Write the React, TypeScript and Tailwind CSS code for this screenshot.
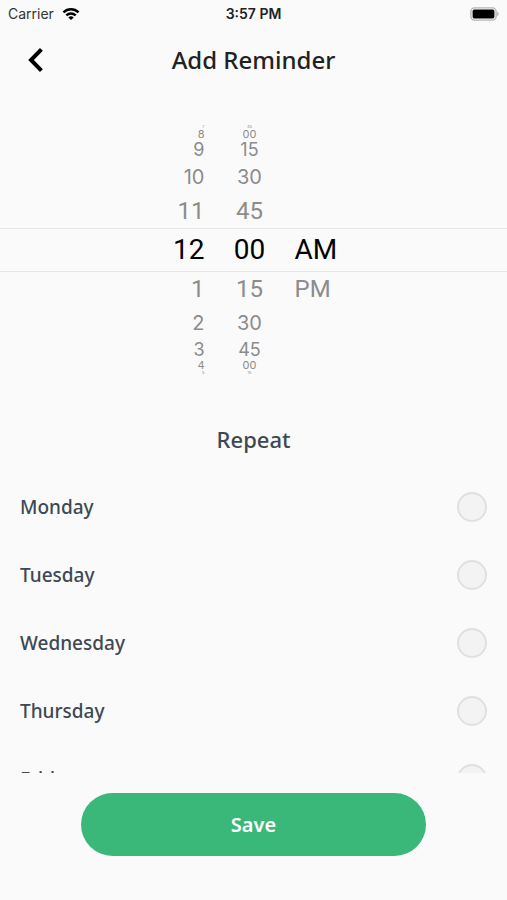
import React, { useState } from "react";
import clsx from "clsx";

const HOURS = ["12", "1", "2", "3", "4", "5", "6", "7", "8", "9", "10", "11"];
const MINUTES = ["00", "15", "30", "45"];
const PERIODS = ["AM", "PM"];
const DAYS = [
  "Monday",
  "Tuesday",
  "Wednesday",
  "Thursday",
  "Friday",
  "Saturday",
  "Sunday",
];

const OFFSETS = [-5, -4, -3, -2, -1, 0, 1, 2, 3, 4, 5];

// Row look by distance from the selected row, rows get smaller near the rim
const ROW_STYLES = [
  "h-11 text-[28px] text-black",
  "h-[34px] text-2xl text-[#8c8c8c]",
  "h-[34px] text-xl text-[#8c8c8c] font-['Inter',sans-serif]",
  "h-5 text-lg text-[#8c8c8c] font-['Inter',sans-serif]",
  "h-[11px] text-[11px] text-[#8c8c8c] font-['Inter',sans-serif]",
  "h-1 text-[4px] text-[#8c8c8c] font-['Inter',sans-serif]",
];

interface WheelProps {
  label: string;
  items: string[];
  value: number;
  loop?: boolean;
  className: string;
  onChange: (index: number) => void;
}

const Wheel = ({
  label,
  items,
  value,
  loop = false,
  className,
  onChange,
}: WheelProps) => (
  <div
    role="group"
    aria-label={label}
    className={clsx("flex flex-col", className)}
  >
    {OFFSETS.map((offset) => {
      const raw = value + offset;
      const index = loop ? (raw + items.length * 5) % items.length : raw;
      const rowStyle = ROW_STYLES[Math.abs(offset)];
      if (!items[index]) {
        return <div key={offset} className={rowStyle} />;
      }
      return (
        <button
          key={offset}
          type="button"
          aria-pressed={offset === 0}
          onClick={() => onChange(index)}
          className={clsx("flex items-center", rowStyle, "leading-none")}
        >
          {items[index]}
        </button>
      );
    })}
  </div>
);

const StatusBar = () => (
  <div className="grid h-7 shrink-0 grid-cols-3 items-center px-2 font-['Inter',sans-serif] text-sm text-[#333]">
    <div className="flex items-center gap-2">
      <span>Carrier</span>
      <svg width="18" height="14" viewBox="0 0 20 14" aria-hidden="true">
        <g fill="none" stroke="#000" strokeWidth="2.6">
          <path d="M1.6 5.2a12 12 0 0 1 16.8 0" />
          <path d="M4.8 8.6a7.4 7.4 0 0 1 10.4 0" />
        </g>
        <path d="M10 13.6 7 10.8a4.4 4.4 0 0 1 6 0z" fill="#000" />
      </svg>
    </div>
    <span className="text-center font-semibold text-[#222]">3:57 PM</span>
    <svg
      className="justify-self-end"
      width="29"
      height="14"
      viewBox="0 0 29 14"
      aria-hidden="true"
    >
      <rect
        x="0.9"
        y="0.9"
        width="25.2"
        height="12.2"
        rx="3.6"
        fill="#fafafa"
        stroke="#b5b5b5"
        strokeWidth="1.4"
      />
      <rect x="2.6" y="2.6" width="21.8" height="8.8" rx="1.6" fill="#000" />
      <path d="M27.2 4.8c2 .6 2 3.8 0 4.4z" fill="#b5b5b5" />
    </svg>
  </div>
);

const App = () => {
  const [hour, setHour] = useState(0);
  const [minute, setMinute] = useState(0);
  const [period, setPeriod] = useState(0);
  const [days, setDays] = useState<string[]>([]);

  const toggleDay = (day: string) => {
    setDays((prev) =>
      prev.includes(day) ? prev.filter((d) => d !== day) : [...prev, day]
    );
  };

  const handleSubmit = (e: React.FormEvent) => {
    e.preventDefault();
  };

  return (
    <div className="flex h-screen flex-col bg-[#fafafa] font-['Noto_Sans',sans-serif]">
      <StatusBar />

      <header className="grid h-16 shrink-0 grid-cols-[40px_1fr_40px] items-center px-4">
        <button
          type="button"
          aria-label="Back"
          className="flex size-10 items-center justify-center"
        >
          <svg width="16" height="24" viewBox="0 0 16 24" aria-hidden="true">
            <path
              d="M13.4 1.4 3 12l10.4 10.6"
              fill="none"
              stroke="#000"
              strokeWidth="4"
            />
          </svg>
        </button>
        <h1 className="text-center text-2xl font-medium text-[#222]">
          Add Reminder
        </h1>
      </header>

      <form onSubmit={handleSubmit} className="flex min-h-0 flex-1 flex-col">
        <div className="relative mt-[33px] flex shrink-0 justify-center gap-[29px] font-['Roboto',sans-serif]">
          <div className="pointer-events-none absolute inset-x-0 top-1/2 h-11 -translate-y-1/2 border-y border-[#e6e6e6]" />
          <Wheel
            label="Hour"
            items={HOURS}
            value={hour}
            loop
            className="w-8 items-end"
            onChange={setHour}
          />
          <Wheel
            label="Minute"
            items={MINUTES}
            value={minute}
            loop
            className="w-8 items-center"
            onChange={setMinute}
          />
          <Wheel
            label="AM or PM"
            items={PERIODS}
            value={period}
            className="w-10 items-start"
            onChange={setPeriod}
          />
        </div>

        <h2 className="mt-8 mb-0.5 flex h-16 shrink-0 items-center justify-center text-[22px] leading-none font-medium text-[#3d4852]">
          Repeat
        </h2>

        <ul className="min-h-0 flex-1 overflow-y-auto [scrollbar-width:none]">
          {DAYS.map((day) => (
            <li key={day}>
              <label className="flex h-[68px] items-center justify-between px-5 text-[19px] font-medium text-[#3d4852]">
                {day}
                <input
                  type="checkbox"
                  checked={days.includes(day)}
                  onChange={() => toggleDay(day)}
                  className="size-[30px] appearance-none rounded-full border-2 border-[#e0e0e0] bg-[#f3f3f3] checked:border-[#3ab87a] checked:bg-[#3ab87a]"
                />
              </label>
            </li>
          ))}
        </ul>

        <div className="flex shrink-0 justify-center pt-5 pb-11">
          <button
            type="submit"
            className="h-[63px] w-[68%] rounded-full bg-[#3ab87a] text-xl font-semibold text-white"
          >
            Save
          </button>
        </div>
      </form>
    </div>
  );
};

export default App;
